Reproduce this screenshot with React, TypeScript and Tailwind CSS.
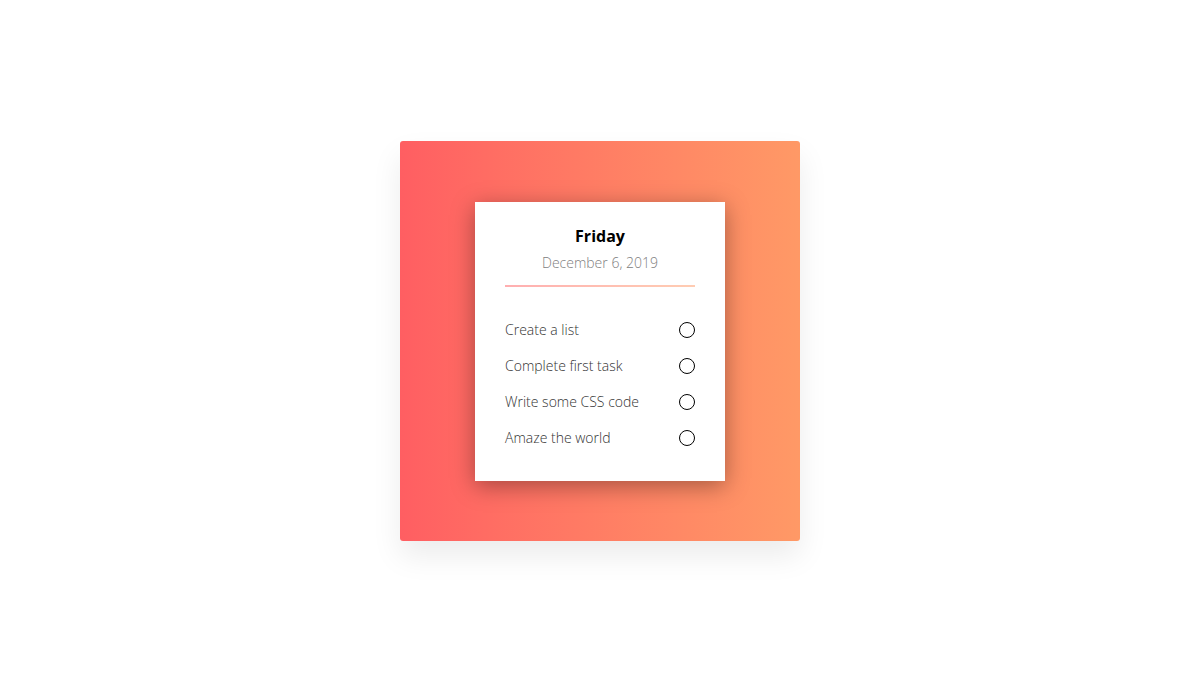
const tasks = ["Create a list", "Complete first task", "Write some CSS code", "Amaze the world"]

export default function App() {
  return (
    <div className="w-full h-[682px] bg-white flex items-center justify-center font-['Open_Sans',sans-serif]">
      <div className="w-[400px] h-[400px] rounded-[3px] bg-gradient-to-r from-[#ff5e62] to-[#ff9966] shadow-[0_15px_30px_rgba(0,0,0,0.08)] flex items-center justify-center">
        <div className="w-[250px] h-[279px] bg-white shadow-[0_5px_22px_rgba(0,0,0,0.35)] px-[30px] pt-[23px]">
          <div className="text-center">
            <h1 className="text-[16px] leading-[22px] font-bold text-black">Friday</h1>
            <p className="mt-[6px] text-[14px] leading-[20px] font-light text-[#808080]">December 6, 2019</p>
          </div>
          <div className="mt-[12px] h-[2px] bg-gradient-to-r from-[#ff5e62] to-[#ff9966] opacity-50" />
          <ul className="mt-[33px] flex flex-col gap-[16px]">
            {tasks.map((t) => (
              <li key={t} className="flex items-center justify-between h-[20px]">
                <span className="text-[14px] leading-[20px] font-light text-[#333]">{t}</span>
                <span className="w-[16px] h-[16px] rounded-full border border-black" />
              </li>
            ))}
          </ul>
        </div>
      </div>
    </div>
  )
}
